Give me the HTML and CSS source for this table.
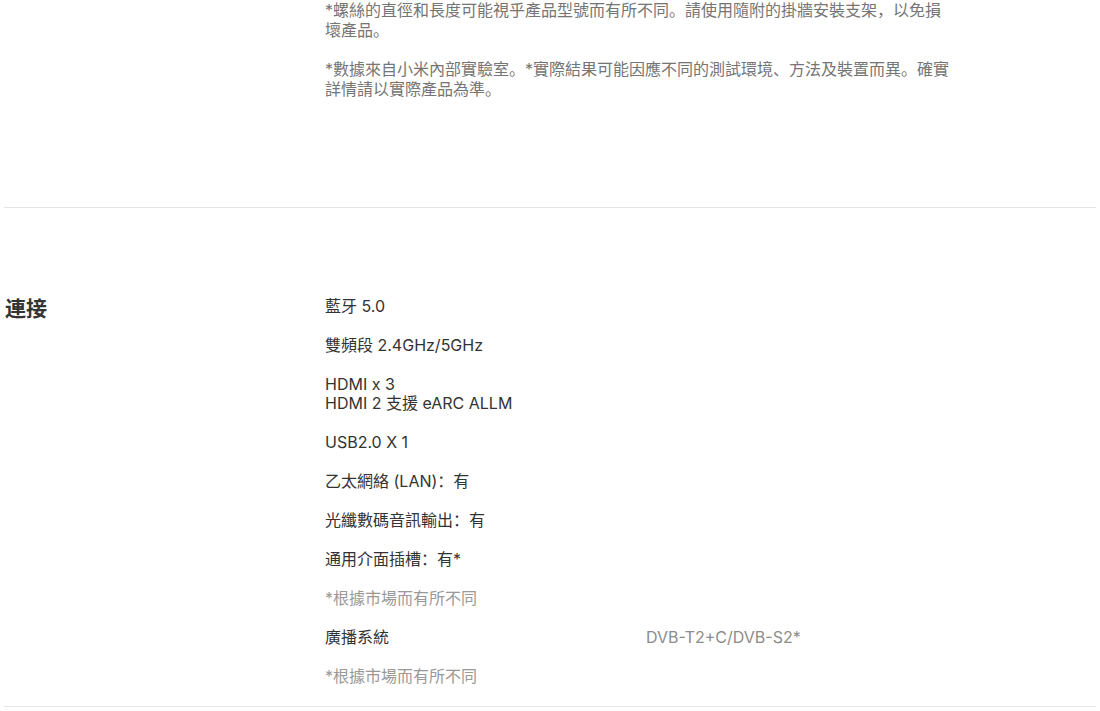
FILE: index.html
```html
<!DOCTYPE html>
<html lang="zh">
<head>
    <meta charset="UTF-8">
    <meta name="viewport" content="width=device-width, initial-scale=1.0">
    <title>規格</title>
    <link rel="stylesheet" href="styles.css">
</head>
<body>
    <main class="specs">
        <section class="spec spec-prev">
            <div class="spec-title"></div>
            <div class="spec-body">
                <p class="note">*螺絲的直徑和長度可能視乎產品型號而有所不同。請使用隨附的掛牆安裝支架，以免損壞產品。</p>
                <p class="note">*數據來自小米內部實驗室。*實際結果可能因應不同的測試環境、方法及裝置而異。確實詳情請以實際產品為準。</p>
            </div>
        </section>

        <section class="spec">
            <h2 class="spec-title">連接</h2>
            <div class="spec-body">
                <p class="item">藍牙 5.0</p>
                <p class="item">雙頻段 2.4GHz/5GHz</p>
                <p class="item">HDMI x 3<br>HDMI 2 支援 eARC ALLM</p>
                <p class="item">USB2.0 X 1</p>
                <p class="item">乙太網絡 (LAN)：有</p>
                <p class="item">光纖數碼音訊輸出：有</p>
                <p class="item">通用介面插槽：有*</p>
                <p class="item item-note">*根據市場而有所不同</p>
                <div class="item item-row">
                    <span>廣播系統</span>
                    <span class="item-value">DVB-T2+C/DVB-S2*</span>
                </div>
                <p class="item item-note">*根據市場而有所不同</p>
            </div>
        </section>
    </main>
</body>
</html>
```

FILE: styles.css
```css
body {
    margin: 0;
    padding: 0;
    background-color: #fff;
    font-family: Inter, "Noto Sans CJK SC", sans-serif;
    color: #333;
}

.specs {
    margin: 0 4px;
}

.spec {
    display: grid;
    grid-template-columns: 321px 1fr;
    border-bottom: 1px solid #e5e5e5;
    padding: 89px 0 0;
}

.spec-prev {
    padding: 0 0 108px;
}

.spec-title {
    margin: -2px 0 0;
    padding-left: 1px;
    font-size: 21px;
    font-weight: bold;
    line-height: 28px;
    color: #333;
}

.spec-body {
    max-width: 628px;
}

.note {
    margin: 0 0 19px;
    font-size: 16px;
    line-height: 20px;
    color: #757575;
}

.note:last-child {
    margin-bottom: 0;
}

.item {
    margin: 0 0 20px;
    font-size: 16px;
    line-height: 19px;
    color: #333;
}

.item-note {
    color: #999;
}

.item-row {
    display: grid;
    grid-template-columns: 321px 1fr;
}

.item-value {
    color: #8c8c8c;
}
```
